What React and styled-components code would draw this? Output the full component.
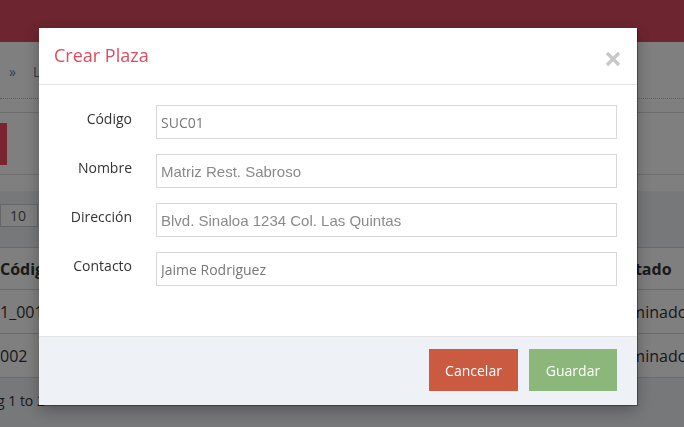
import React from 'react';
import styled, { createGlobalStyle } from 'styled-components';

const GlobalStyle = createGlobalStyle`
  html, body {
    margin: 0;
    padding: 0;
    width: 684px;
    height: 427px;
    overflow: hidden;
    background: #eef1f5;
    font-family: "Open Sans", "Liberation Sans", sans-serif;
  }
`;

const Page = styled.div`
  width: 684px;
  height: 427px;
  overflow: hidden;
  display: flex;
  flex-direction: column;
  background: #eef1f5;
`;

const TopBar = styled.div`
  height: 42px;
  background: #db4b60;
  flex-shrink: 0;
`;

const Breadcrumb = styled.div`
  height: 70px;
  background: #ffffff;
  border-bottom: 1px solid #dcdcdc;
  display: flex;
  flex-direction: column;
  flex-shrink: 0;
`;

const Crumbs = styled.div`
  height: 57px;
  display: flex;
  align-items: center;
  gap: 17px;
  padding: 2px 0 0 9px;
  box-sizing: border-box;
  font-size: 14px;
  color: #6b7d9a;
  border-bottom: 1px dotted #bbbbbb;
`;

const ActionBar = styled.div`
  height: 62px;
  background: #ffffff;
  border-bottom: 1px solid #dcdcdc;
  display: flex;
  align-items: flex-start;
  padding-top: 10px;
  box-sizing: border-box;
  flex-shrink: 0;
`;

const RedBlock = styled.div`
  width: 7px;
  height: 42px;
  background: #f24a60;
`;

const Spacer = styled.div`
  height: 16px;
  background: #ffffff;
  flex-shrink: 0;
`;

const Content = styled.div`
  padding-top: 13px;
  display: flex;
  flex-direction: column;
`;

const LengthBox = styled.div`
  width: 38px;
  height: 23px;
  box-sizing: border-box;
  border: 1px solid #c9ccd2;
  background: #ffffff;
  font-size: 14px;
  color: #555;
  padding-left: 9px;
  line-height: 21px;
`;

const Table = styled.div`
  margin-top: 20px;
  background: #ffffff;
  border-top: 1px solid #d6d6d6;
`;

const TRow = styled.div`
  height: ${p => (p.head ? 41 : 43)}px;
  border-bottom: 1px solid #d6d6d6;
  display: flex;
  justify-content: space-between;
  align-items: center;
  font-size: 16px;
  font-weight: ${p => (p.head ? 700 : 400)};
  color: #333;
  white-space: nowrap;
`;

const Cell = styled.span`
  width: ${p => p.w}px;
  overflow: hidden;
`;

const Footnote = styled.div`
  font-size: 14px;
  color: #333;
  padding: 13px 0 0 0;
  margin-left: -3px;
  white-space: nowrap;
`;

const Overlay = styled.div`
  position: fixed;
  inset: 0;
  background: rgba(0, 0, 0, 0.5);
  padding: 28px 47px 0 39px;
`;

const Modal = styled.div`
  width: 598px;
  background: #ffffff;
  box-shadow: 1px 1px 0 rgba(0, 0, 0, 0.35), 0 5px 15px rgba(0, 0, 0, 0.3);
`;

const ModalHeader = styled.div`
  height: 57px;
  border-bottom: 1px solid #e5e5e5;
  display: flex;
  align-items: center;
  justify-content: space-between;
  padding: 0 16px 0 15px;
  box-sizing: border-box;
`;

const Title = styled.h4`
  margin: 0;
  font-size: 18px;
  font-weight: 400;
  color: #e34a5c;
  padding-bottom: 2px;
`;

const Close = styled.button`
  border: 0;
  background: none;
  padding: 0;
  display: flex;
  cursor: pointer;
  margin-top: 5px;
`;

const ModalBody = styled.div`
  padding: 20px 20px 50px 15px;
  display: grid;
  grid-template-columns: 78px 461px;
  column-gap: 24px;
  row-gap: 15px;
`;

const Label = styled.label`
  font-size: 14px;
  color: #333;
  text-align: right;
  padding-top: 4px;
`;

const Input = styled.input`
  height: 34px;
  box-sizing: border-box;
  border: 1px solid #d8d8d8;
  padding: 0 4px;
  font-family: ${p => (p.arial ? '"Liberation Sans", Arial, sans-serif' : '"Open Sans", sans-serif')};
  font-size: ${p => (p.arial ? 15 : 14)}px;
  color: ${p => (p.arial ? '#8a8a8a' : '#777')};
  outline: none;
`;

const ModalFooter = styled.div`
  background: #eef1f5;
  border-top: 1px solid #e5e5e5;
  padding: 12px 20px 14px;
  display: flex;
  justify-content: flex-end;
  gap: 11px;
`;

const Button = styled.button`
  height: 42px;
  width: ${p => p.w}px;
  border: 0;
  background: ${p => p.bg};
  color: #ffffff;
  font-family: "Open Sans", sans-serif;
  font-size: 14px;
  cursor: pointer;
`;

const fields = [
  { label: 'Código', value: 'SUC01' },
  { label: 'Nombre', value: 'Matriz Rest. Sabroso', arial: true },
  { label: 'Dirección', value: 'Blvd. Sinaloa 1234 Col. Las Quintas', arial: true },
  { label: 'Contacto', value: 'Jaime Rodriguez' },
];

const rows = [
  { code: '1_001', status: 'Terminado' },
  { code: '002', status: 'Terminado' },
];

export default function App() {
  return (
    <>
      <GlobalStyle />
      <Page>
        <TopBar />
        <Breadcrumb>
          <Crumbs>
            <span>»</span>
            <span>L</span>
          </Crumbs>
        </Breadcrumb>
        <ActionBar>
          <RedBlock />
        </ActionBar>
        <Spacer />
        <Content>
          <LengthBox>10</LengthBox>
          <Table>
            <TRow head>
              <Cell w={120}>Código</Cell>
              <Cell w={66}>Estado</Cell>
            </TRow>
            {rows.map(r => (
              <TRow key={r.code}>
                <Cell w={120}>{r.code}</Cell>
                <Cell w={78}>{r.status}</Cell>
              </TRow>
            ))}
          </Table>
          <Footnote>g 1 to 2</Footnote>
        </Content>
      </Page>
      <Overlay>
        <Modal>
          <ModalHeader>
            <Title>Crear Plaza</Title>
            <Close aria-label="Cerrar">
              <svg width="16" height="16" viewBox="0 0 16 16">
                <path d="M2 2 L14 14 M14 2 L2 14" stroke="#c7c7c7" strokeWidth="3.2" />
              </svg>
            </Close>
          </ModalHeader>
          <ModalBody>
            {fields.map(f => (
              <React.Fragment key={f.label}>
                <Label>{f.label}</Label>
                <Input arial={f.arial} defaultValue={f.value} />
              </React.Fragment>
            ))}
          </ModalBody>
          <ModalFooter>
            <Button bg="#cb5b40" w={89}>Cancelar</Button>
            <Button bg="#8bb87a" w={88}>Guardar</Button>
          </ModalFooter>
        </Modal>
      </Overlay>
    </>
  );
}
